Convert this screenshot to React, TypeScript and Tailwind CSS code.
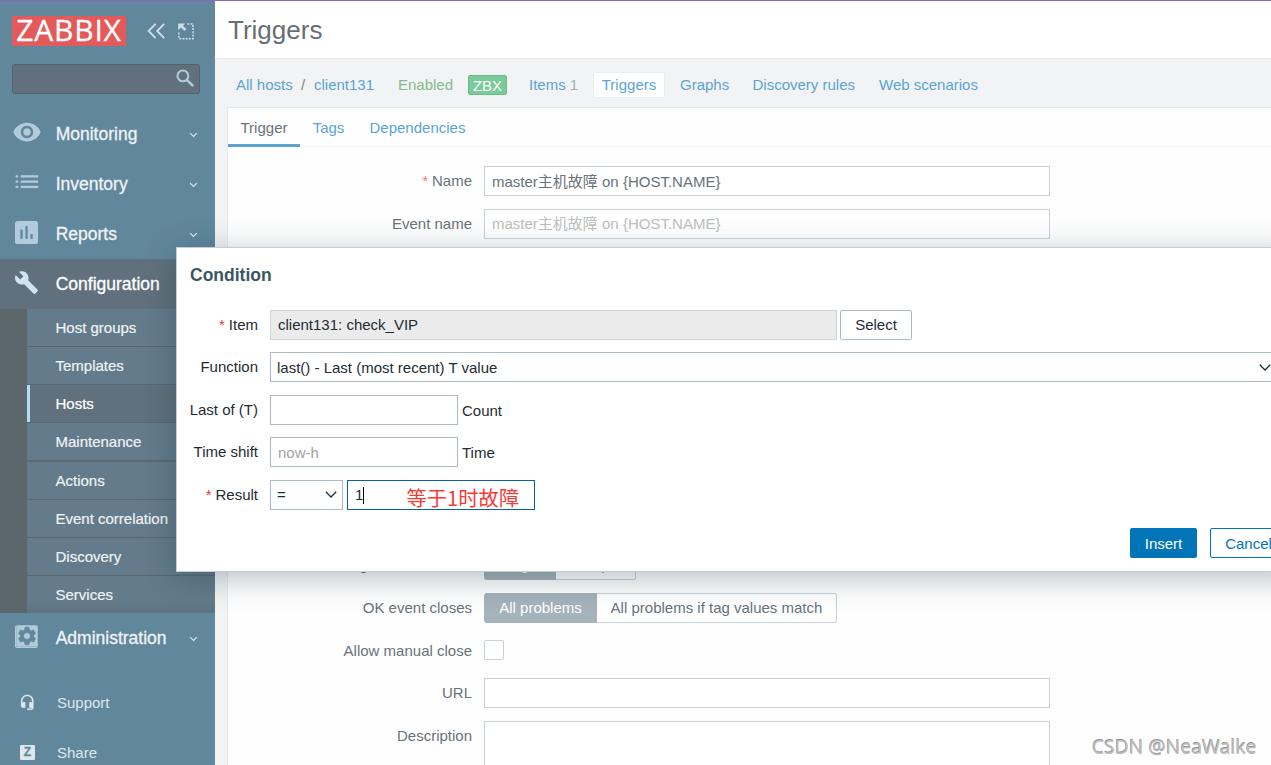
import React from "react";
import { MdBuild, MdHeadsetMic, MdSettings, MdVisibility } from "react-icons/md";

const Chevron = ({ className }: { className: string }) => (
  <svg className={className} viewBox="0 0 12 7" fill="none" stroke="currentColor" strokeWidth="1.3">
    <path d="M0.8 0.8 L6 6 L11.2 0.8" />
  </svg>
);

const SmallChevron = () => (
  <svg
    className="mt-[2px] mr-[17px] h-[6px] w-[9px] text-[#dfe8ed]"
    viewBox="0 0 9 6"
    fill="none"
    stroke="currentColor"
    strokeWidth="1.2"
  >
    <path d="M1.2 1.1 L4.5 4.4 L7.8 1.1" />
  </svg>
);

const ListIcon = () => (
  <svg width="24" height="16" viewBox="0 0 24 16" fill="currentColor">
    <rect x="0.5" y="1.2" width="2.8" height="2.3" rx="0.8" />
    <rect x="0.5" y="6.5" width="2.8" height="2.3" rx="0.8" />
    <rect x="0.5" y="11.8" width="2.8" height="2.3" rx="0.8" />
    <rect x="5.7" y="1.2" width="17.5" height="2.3" />
    <rect x="5.7" y="6.5" width="17.5" height="2.3" />
    <rect x="5.7" y="11.8" width="17.5" height="2.3" />
  </svg>
);

const ChartIcon = () => (
  <svg width="23" height="23" viewBox="0 0 23 23">
    <rect width="23" height="23" rx="2.6" fill="currentColor" />
    <g fill="#61879d">
      <rect x="5.4" y="8.6" width="2.3" height="9.2" />
      <rect x="10.4" y="5.2" width="2.3" height="12.6" />
      <rect x="15.4" y="13" width="2.3" height="4.8" />
    </g>
  </svg>
);

const GearIcon = () => (
  <span className="flex size-[23px] items-center justify-center rounded-[2.6px] bg-[#b1cbda]">
    <MdSettings className="size-[22px] shrink-0 text-[#61879d] [stroke-width:0.5px] [stroke:currentColor]" />
  </span>
);

const SearchIcon = () => (
  <svg width="19" height="19" viewBox="0 0 19 19" fill="none" stroke="#b1cbda">
    <circle cx="6.9" cy="6.9" r="5.4" strokeWidth="2.1" />
    <path d="M10.8 10.8 L17.2 17.2" strokeWidth="2.6" />
  </svg>
);

type MenuItemProps = { icon: React.ReactNode; label: string; active?: boolean };

const MenuItem = ({ icon, label, active }: MenuItemProps) => (
  <div
    className={
      active
        ? "flex h-[50px] shrink-0 items-center bg-[#60717d] text-white"
        : "flex h-[50px] shrink-0 items-center text-[#eff3f5]"
    }
  >
    <span
      className={
        active
          ? "flex w-[53.5px] justify-center pb-1 text-[#cfe3f1]"
          : "flex w-[53.5px] justify-center pb-1 text-[#b1cbda]"
      }
    >
      {icon}
    </span>
    <span className="ml-[2.2px] flex-1 text-[17.5px] [-webkit-text-stroke:0.3px_currentColor]">{label}</span>
    <SmallChevron />
  </div>
);

const subItems = [
  "Host groups",
  "Templates",
  "Hosts",
  "Maintenance",
  "Actions",
  "Event correlation",
  "Discovery",
  "Services",
];

const subClass = (name: string) => {
  if (name === "Hosts") return "flex h-[38px] items-stretch border-b border-[#5a676d] bg-[#60717d] text-white";
  if (name === "Maintenance") return "flex h-[39px] items-center border-b-2 border-[#5c6a71] pl-[28.5px]";
  if (name === "Services")
    return "flex h-[37px] items-center bg-gradient-to-b from-[#637b8a] from-70% to-[#5f7480] pl-[28.5px]";
  return "flex h-[38px] items-center border-b border-[#5a676d] pl-[28.5px]";
};

const Sidebar = () => (
  <aside className="flex w-[215px] shrink-0 flex-col bg-[#61879d]">
    <div className="flex h-[60px] shrink-0 items-center pl-3">
      <div className="flex h-[30px] w-[114px] items-center justify-center bg-[#e45959] font-['Open_Sans'] text-[30px] leading-[30px] tracking-[0.8px] text-white">
        <span className="-mt-[2px] [-webkit-text-stroke:0.3px_currentColor]">ZABBIX</span>
      </div>
      <svg className="ml-[21px]" width="19" height="16" viewBox="0 0 19 16" fill="none" stroke="#cfdde6" strokeWidth="1.9">
        <path d="M8.6 0.8 L1.6 8 L8.6 15.2 M17.2 0.8 L10.2 8 L17.2 15.2" />
      </svg>
      <svg className="ml-[12px]" width="16" height="17" viewBox="0 0 16 17" fill="none" stroke="#cfdde6">
        <path d="M9.4 1.1 H15 V15.7 H0.9 V9" strokeWidth="1.5" strokeDasharray="2 1.2" />
        <path d="M0.2 0.5 H7 L4.9 2.7 L8.3 6.1 L6.5 7.9 L3 4.5 L0.2 7.2 Z" fill="#cfdde6" stroke="none" />
      </svg>
    </div>
    <div className="ml-3 mt-[3px] flex h-[30px] w-[188px] shrink-0 items-center justify-end rounded-[3px] border border-[#56626a] bg-[#60717d] pb-px pr-[4px]">
      <SearchIcon />
    </div>
    <nav className="mt-[15px] flex flex-col">
      <MenuItem icon={<MdVisibility className="size-[30px]" />} label="Monitoring" />
      <MenuItem icon={<ListIcon />} label="Inventory" />
      <MenuItem icon={<ChartIcon />} label="Reports" />
      <MenuItem icon={<MdBuild className="size-[25px]" />} label="Configuration" active />
      <div className="flex bg-[#5c676c]">
        <div className="w-[27px]" />
        <div className="flex-1 bg-[#637b8a] text-[15px] text-[#eff3f5]">
          {subItems.map((s) => (
            <div key={s} className={subClass(s)}>
              {s === "Hosts" && <span className="mr-[25.5px] w-[3px] bg-[#b0dcf8]" />}
              <span className="self-center [-webkit-text-stroke:0.2px_currentColor]">{s}</span>
            </div>
          ))}
        </div>
      </div>
      <MenuItem icon={<GearIcon />} label="Administration" />
    </nav>
    <div className="mt-[15px] flex flex-col text-[15px] text-[#dfe7eb]">
      <div className="flex h-[50px] items-center">
        <span className="flex w-[55px] justify-center">
          <MdHeadsetMic className="-mt-px size-[16.5px] [stroke-width:0.4px] [stroke:currentColor]" />
        </span>
        <span className="ml-[2px]">Support</span>
      </div>
      <div className="flex h-[50px] items-center">
        <span className="flex w-[55px] justify-center">
          <span className="-mt-px flex size-[15px] items-center justify-center rounded-[1px] bg-[#dfe7eb] text-[12px] font-bold leading-[15px] text-[#61879d] [-webkit-text-stroke:0.3px_currentColor]">
            Z
          </span>
        </span>
        <span className="ml-[2px]">Share</span>
      </div>
    </div>
  </aside>
);

const Field = ({ label, required, children }: { label: string; required?: boolean; children?: React.ReactNode }) => (
  <div className="flex">
    <div className="mr-3 flex h-[30px] w-[244px] items-center justify-end whitespace-nowrap">
      {required && <span className="mr-1 text-[#ee7b7b]">*</span>}
      {label}
    </div>
    {children}
  </div>
);

const Content = () => (
  <main className="flex flex-1 flex-col overflow-hidden bg-[#f2f3f5]">
    <h1 className="flex h-[58px] shrink-0 items-center border-b border-[#e9ebec] bg-white pl-[13px] text-[26px] text-[#656f75]">
      Triggers
    </h1>
    <div className="flex h-[48px] shrink-0 items-center pl-[21px] pt-[4px] text-[#5ba5d3]">
      <span className="w-[65px]">All hosts</span>
      <span className="w-[13px] text-[#7c868b]">/</span>
      <span className="w-[84px]">client131</span>
      <span className="w-[70px] text-[#82bd8b]">Enabled</span>
      <span className="mr-[22px] flex h-[20px] w-[39px] items-center justify-center rounded-[2px] border border-[#6dbb8b] bg-[#7bcb9a] pt-px text-white">
        ZBX
      </span>
      <span className="w-[64px] whitespace-nowrap">
        Items <span className="text-[#a5afb4]">1</span>
      </span>
      <span className="mr-[15px] flex h-[26px] w-[72px] items-center justify-center rounded-[2px] border border-[#ebedee] bg-white">
        Triggers
      </span>
      <span className="w-[72.5px]">Graphs</span>
      <span className="w-[126.5px]">Discovery rules</span>
      <span>Web scenarios</span>
    </div>
    <section className="ml-3 flex flex-1 flex-col border-l border-t border-[#e7eaec] bg-[#fefefe] text-[#69737a]">
      <div className="flex h-[39px] shrink-0 border-b border-[#f0f2f3] text-[#5ba5d3]">
        <span className="-mb-px flex h-[39px] w-[72px] items-center justify-center border-b-[3px] border-[#5ba5d3] pt-[3px] text-[#69737a]">
          Trigger
        </span>
        <span className="flex w-[57px] items-center justify-center pt-[1px]">Tags</span>
        <span className="flex items-center pl-[12.5px] pt-[1px]">Dependencies</span>
      </div>
      <div className="mt-[19px] flex flex-col">
        <Field label="Name" required>
          <div className="flex h-[30px] w-[566px] items-center border border-[#c7d1d6] bg-white pl-[7px] pt-[2px]">
            master主机故障 on {"{HOST.NAME}"}
          </div>
        </Field>
        <div className="mt-[13px]">
          <Field label="Event name">
            <div className="flex h-[30px] w-[566px] items-center border border-[#c7d1d6] bg-white pl-[7px] text-[#bdbfc0]">
              master主机故障 on {"{HOST.NAME}"}
            </div>
          </Field>
        </div>
        <div className="mt-[311px]">
          <Field label="PROBLEM event generation mode">
            <div className="flex h-[30px]">
              <div className="flex w-[72px] items-center justify-center rounded-l-[3px] bg-[#a5b3bb] text-white">Single</div>
              <div className="flex w-[80px] items-center justify-center rounded-r-[3px] border border-l-0 border-[#c7d1d6] bg-white text-[#5ba5d3]">
                Multiple
              </div>
            </div>
          </Field>
        </div>
        <div className="mt-[13px]">
          <Field label="OK event closes">
            <div className="flex h-[30px]">
              <div className="flex w-[113px] items-center justify-center rounded-l-[3px] bg-[#a5b3bb] text-white">
                All problems
              </div>
              <div className="flex w-[240px] items-center justify-center rounded-r-[3px] border border-l-0 border-[#c7d1d6] bg-white">
                All problems if tag values match
              </div>
            </div>
          </Field>
        </div>
        <div className="mt-[13px]">
          <Field label="Allow manual close">
            <div className="mt-[4px] size-[20px] rounded-[2px] border border-[#c7d1d6] bg-white" />
          </Field>
        </div>
        <div className="mt-[12px]">
          <Field label="URL">
            <div className="h-[30px] w-[566px] border border-[#c7d1d6] bg-white" />
          </Field>
        </div>
        <div className="mt-[13px]">
          <Field label="Description">
            <div className="h-[80px] w-[566px] border border-[#c7d1d6] bg-white" />
          </Field>
        </div>
      </div>
    </section>
  </main>
);

const DialogRow = ({ label, required, children }: { label: string; required?: boolean; children: React.ReactNode }) => (
  <div className="flex h-[30px] items-center">
    <div className="mr-3 flex w-[81px] justify-end whitespace-nowrap">
      {required && <span className="mr-1 text-[#e33734]">*</span>}
      {label}
    </div>
    {children}
  </div>
);

const Dialog = () => (
  <div className="absolute left-[176px] top-[247px] h-[325px] w-[1126px] border border-[#c5ced3] bg-white text-[#1f2c33] shadow-[0_6px_30px_rgba(10,44,56,0.3)]">
    <h2 className="ml-[13px] mt-[17px] text-[17.5px] font-bold leading-[21px] text-[#3c5563]">Condition</h2>
    <div className="mt-[24px] flex flex-col">
      <DialogRow label="Item" required>
        <div className="flex h-[30px] w-[567px] items-center border border-[#ccd5d9] bg-[#ebebeb] pl-[7px]">
          client131: check_VIP
        </div>
        <div className="ml-[3px] flex h-[30px] w-[72px] items-center justify-center rounded-[2px] border border-[#acbbc2]">
          Select
        </div>
      </DialogRow>
      <div className="mt-[12px]">
        <DialogRow label="Function">
          <div className="flex h-[30px] w-[1014px] items-center border border-[#acbbc2] pl-[6px] pt-[2px]">
            <span className="w-[981.5px]">last() - Last (most recent) T value</span>
            <Chevron className="-mt-[2px] h-[7px] w-[12px] shrink-0" />
          </div>
        </DialogRow>
      </div>
      <div className="mt-[13px]">
        <DialogRow label="Last of (T)">
          <div className="h-[30px] w-[188px] border border-[#acbbc2]" />
          <span className="ml-[4px] mt-[2px]">Count</span>
        </DialogRow>
      </div>
      <div className="mt-[12px]">
        <DialogRow label="Time shift">
          <div className="flex h-[30px] w-[188px] items-center border border-[#acbbc2] pl-[7px] pt-[2px] text-[#a3a3a3]">now-h</div>
          <span className="ml-[4px] mt-[2px]">Time</span>
        </DialogRow>
      </div>
      <div className="mt-[13px]">
        <DialogRow label="Result" required>
          <div className="flex h-[30px] w-[73px] items-center justify-between border border-[#acbbc2] pl-[6px] pr-[5px]">
            <span>=</span>
            <Chevron className="-mt-px h-[7px] w-[12px]" />
          </div>
          <div className="relative ml-[4px] flex h-[30px] w-[188px] items-center border border-[#02659f] pl-[7px]">
            <span>1</span>
            <span className="h-[17px] w-px bg-black" />
            <span className="absolute left-[58.5px] top-[2px] whitespace-nowrap font-['Noto_Sans_CJK_SC',sans-serif] text-[20.3px] leading-[29px] text-[#f73b35]">
              等于1时故障
            </span>
          </div>
        </DialogRow>
      </div>
    </div>
    <div className="ml-[953px] mt-[18px] flex gap-[13px]">
      <div className="flex h-[30px] w-[67px] items-center justify-center rounded-[2px] bg-[#0275b8] pt-[2px] text-white">
        Insert
      </div>
      <div className="flex h-[30px] w-[77px] items-center justify-center rounded-[2px] border border-[#0275b8] pt-[2px] text-[#0275b8]">
        Cancel
      </div>
    </div>
  </div>
);

export default function App() {
  return (
    <div className="relative flex h-[765px] w-[1271px] flex-col overflow-hidden bg-white font-['Liberation_Sans','Noto_Sans_CJK_SC',sans-serif] text-[15px] leading-[18px]">
      <div className="h-px shrink-0 bg-[#9063bd]" />
      <div className="flex min-h-0 flex-1">
        <Sidebar />
        <Content />
      </div>
      <Dialog />
      <div className="absolute left-[1092px] top-[734px] whitespace-nowrap font-['Noto_Sans',sans-serif] text-[19.3px] leading-[26px] text-[#bdbdbd] [text-shadow:-0.6px_-0.6px_0_#959595]">
        CSDN @NeaWalke
      </div>
    </div>
  );
}
